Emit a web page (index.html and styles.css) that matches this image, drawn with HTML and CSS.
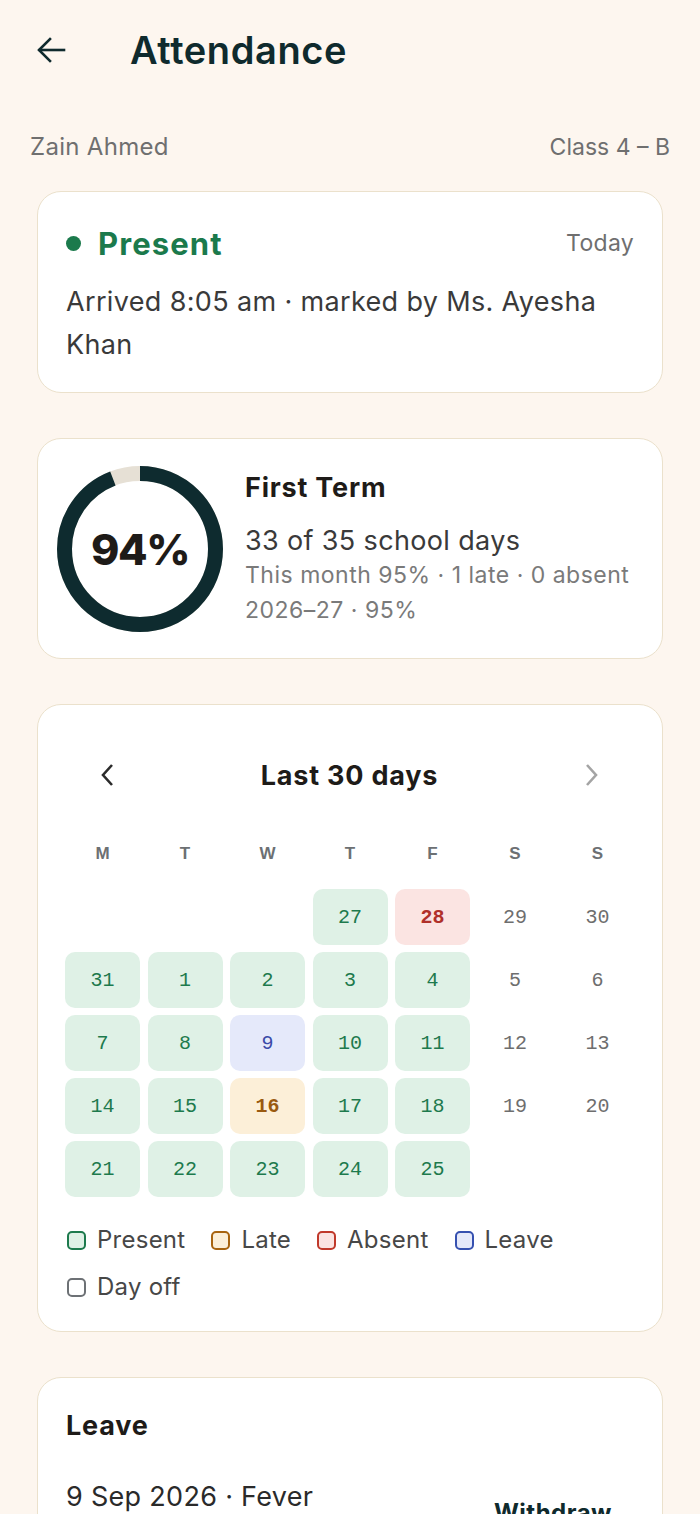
FILE: index.html
```html
<!DOCTYPE html>
<html lang="en">
<head>
<meta charset="utf-8">
<title>Attendance</title>
<link rel="stylesheet" href="styles.css">
</head>
<body>
<header class="appbar">
  <button class="back" aria-label="Back">
    <svg width="32" height="32" viewBox="0 0 32 32" fill="none" stroke="currentColor" stroke-width="2.6" stroke-linecap="square"><path d="M29 16H5"/><path d="M15 5L4 16l11 11"/></svg>
  </button>
  <h1 class="title">Attendance</h1>
</header>

<div class="meta">
  <span class="name">Zain Ahmed</span>
  <span>Class 4 – B</span>
</div>

<main class="cards">
  <section class="card today">
    <div class="today-head">
      <span class="status"><span class="dot"></span>Present</span>
      <span class="when">Today</span>
    </div>
    <p class="today-body">Arrived 8:05 am · marked by Ms. Ayesha Khan</p>
  </section>

  <section class="card term">
    <div class="ring">
      <svg width="166" height="166" viewBox="0 0 166 166">
        <circle class="ring-track" cx="83" cy="83" r="75.5"/>
        <circle class="ring-fill" cx="83" cy="83" r="75.5" stroke-dasharray="445.9 474.4" transform="rotate(-90 83 83)"/>
      </svg>
      <span class="ring-label">94%</span>
    </div>
    <div class="term-text">
      <h2 class="term-title">First Term</h2>
      <p class="term-days">33 of 35 school days</p>
      <p class="term-sub">This month 95% · 1 late · 0 absent</p>
      <p class="term-sub">2026–27 · 95%</p>
    </div>
  </section>

  <section class="card cal">
    <div class="cal-head">
      <button class="chev" aria-label="Previous">
        <svg width="14" height="24" viewBox="0 0 14 24" fill="none" stroke="currentColor" stroke-width="2.6"><path d="M12 2L3 12l9 10"/></svg>
      </button>
      <h2 class="cal-title">Last 30 days</h2>
      <button class="chev chev-off" aria-label="Next">
        <svg width="14" height="24" viewBox="0 0 14 24" fill="none" stroke="currentColor" stroke-width="2.6"><path d="M2 2l9 10-9 10"/></svg>
      </button>
    </div>
    <div class="grid weekdays">
      <span>M</span><span>T</span><span>W</span><span>T</span><span>F</span><span>S</span><span>S</span>
    </div>
    <div class="grid days">
      <span class="day blank"></span><span class="day blank"></span><span class="day blank"></span>
      <span class="day p">27</span><span class="day a">28</span><span class="day o">29</span><span class="day o">30</span>
      <span class="day p">31</span><span class="day p">1</span><span class="day p">2</span><span class="day p">3</span><span class="day p">4</span><span class="day o">5</span><span class="day o">6</span>
      <span class="day p">7</span><span class="day p">8</span><span class="day l">9</span><span class="day p">10</span><span class="day p">11</span><span class="day o">12</span><span class="day o">13</span>
      <span class="day p">14</span><span class="day p">15</span><span class="day t">16</span><span class="day p">17</span><span class="day p">18</span><span class="day o">19</span><span class="day o">20</span>
      <span class="day p">21</span><span class="day p">22</span><span class="day p">23</span><span class="day p">24</span><span class="day p">25</span>
    </div>
    <ul class="legend">
      <li><span class="sw sw-p"></span>Present</li>
      <li><span class="sw sw-t"></span>Late</li>
      <li><span class="sw sw-a"></span>Absent</li>
      <li><span class="sw sw-l"></span>Leave</li>
      <li><span class="sw sw-o"></span>Day off</li>
    </ul>
  </section>

  <section class="card leave">
    <h2 class="leave-title">Leave</h2>
    <div class="leave-row">
      <p class="leave-date">9 Sep 2026 · Fever</p>
      <button class="withdraw">Withdraw</button>
    </div>
  </section>
</main>
</body>
</html>
```

FILE: styles.css
```css
* { box-sizing: border-box; }
html, body { margin: 0; padding: 0; }
body {
  background: #fdf6ef;
  font-family: Inter, "Noto Sans", sans-serif;
  color: #2f2f2f;
  width: 700px;
}
p, h1, h2, ul { margin: 0; padding: 0; }
button { font: inherit; background: none; border: 0; padding: 0; color: inherit; }

.appbar {
  height: 100px;
  display: flex;
  align-items: center;
  padding-left: 35px;
}
.back {
  width: 32px; height: 32px;
  color: #0f2a2d;
  display: flex;
}
.title {
  margin-left: 63px;
  font-size: 38px;
  font-weight: 600;
  color: #0f2a2d;
  letter-spacing: 0.6px;
}

.meta {
  display: flex;
  justify-content: space-between;
  padding: 33px 30px 0;
  font-size: 23px;
  line-height: 28px;
  color: #6f6f6f;
}
.name { font-size: 24px; letter-spacing: 0.3px; }

.cards {
  display: flex;
  flex-direction: column;
  gap: 45px;
  padding: 30px 37px 40px;
}
.card {
  background: #fff;
  border: 1.5px solid #ebe1cc;
  border-radius: 24px;
}

/* today */
.today { padding: 33px 28px 26px 28px; }
.today-head {
  display: flex;
  justify-content: space-between;
  align-items: center;
  height: 36px;
}
.status {
  display: flex;
  align-items: center;
  gap: 17px;
  font-size: 31px;
  font-weight: 700;
  color: #1b7a4c;
  letter-spacing: 1.1px;
}
.dot { width: 15px; height: 15px; border-radius: 50%; background: #1b7a4c; }
.when { font-size: 23px; color: #6f6f6f; letter-spacing: 0.3px; }
.today-body {
  margin-top: 19px;
  font-size: 27px;
  line-height: 43px;
  color: #3a3a3a;
  letter-spacing: 0.35px;
}

/* term */
.term {
  display: flex;
  align-items: center;
  gap: 22px;
  padding: 27px 20px 26px 19px;
}
.ring { position: relative; width: 166px; height: 166px; flex: none; }
.ring svg { display: block; }
.ring-track { fill: none; stroke: #e6e0d5; stroke-width: 15; }
.ring-fill { fill: none; stroke: #0e2b2f; stroke-width: 15; }
.ring-label {
  position: absolute; inset: 0;
  display: flex; align-items: center; justify-content: center;
  font-size: 43px; font-weight: 800; color: #1e1b18;
  letter-spacing: -1.5px;
}
.term-title { font-size: 27px; font-weight: 700; color: #1e1b18; line-height: 34px; letter-spacing: 0.8px; }
.term-days { margin-top: 19px; font-size: 27px; line-height: 34px; color: #3a3a3a; letter-spacing: 0.35px; }
.term-sub { font-size: 23px; line-height: 35px; color: #7a7a7a; letter-spacing: 0.5px; }

/* calendar */
.cal { padding: 28px 27px 30px 27px; }
.cal-head {
  height: 84px;
  display: flex;
  align-items: center;
  justify-content: space-between;
  padding: 0 23px 0 22px;
}
.chev { width: 40px; height: 40px; display: flex; align-items: center; justify-content: center; color: #2b2b2b; }
.chev-off { color: #a4a4a4; }
.cal-title { font-size: 27px; font-weight: 700; color: #1e1b18; letter-spacing: 0.8px; }

.grid {
  display: grid;
  grid-template-columns: repeat(7, 75px);
  column-gap: 7.5px;
}
.weekdays {
  margin-top: 27px;
  height: 20px;
  font-family: "Liberation Sans", Arial, sans-serif;
  font-weight: 700;
  font-size: 17px;
  color: #6c7073;
  text-align: center;
  line-height: 20px;
}
.days { margin-top: 25px; row-gap: 7px; }
.day {
  height: 56px;
  border-radius: 10px;
  display: flex; align-items: center; justify-content: center;
  font-family: "Liberation Mono", "DejaVu Sans Mono", monospace;
  font-size: 20px;
}
.day.p { background: #dff1e6; color: #1d7a4d; }
.day.a { background: #fbe4e2; color: #b0302a; font-weight: 700; }
.day.l { background: #e5e9fa; color: #3a4aa8; }
.day.t { background: #fcefd8; color: #9a5a10; font-weight: 700; }
.day.o { color: #6e6e6e; }

.legend {
  list-style: none;
  margin-top: 29px;
  display: flex;
  flex-wrap: wrap;
  column-gap: 26px;
  row-gap: 19px;
  padding-left: 2px;
}
.legend li {
  display: flex; align-items: center; gap: 11px;
  font-size: 24px; line-height: 28px; color: #474747; letter-spacing: 0.25px;
}
.sw { width: 19px; height: 19px; border-radius: 5px; border: 2px solid; }
.sw-p { border-color: #1d7a4d; background: #dff1e6; }
.sw-t { border-color: #a8640f; background: #fcefd8; }
.sw-a { border-color: #c0392b; background: #fbe4e2; }
.sw-l { border-color: #3651b0; background: #e5e9fa; }
.sw-o { border-color: #6d7175; background: #fff; }

/* leave */
.leave { padding: 32px 28px 28px; }
.leave-title { font-size: 27px; font-weight: 700; color: #1e1b18; line-height: 32px; letter-spacing: 0.8px; }
.leave-row {
  margin-top: 38px;
  display: flex;
  justify-content: space-between;
  align-items: flex-start;
}
.leave-date { font-size: 27px; line-height: 34px; color: #2a2a2a; letter-spacing: 0.3px; }
.withdraw { margin-top: 10px; font-size: 24px; font-weight: 700; color: #0f2a2d; padding: 8px 22px; letter-spacing: 0.5px; }
```
